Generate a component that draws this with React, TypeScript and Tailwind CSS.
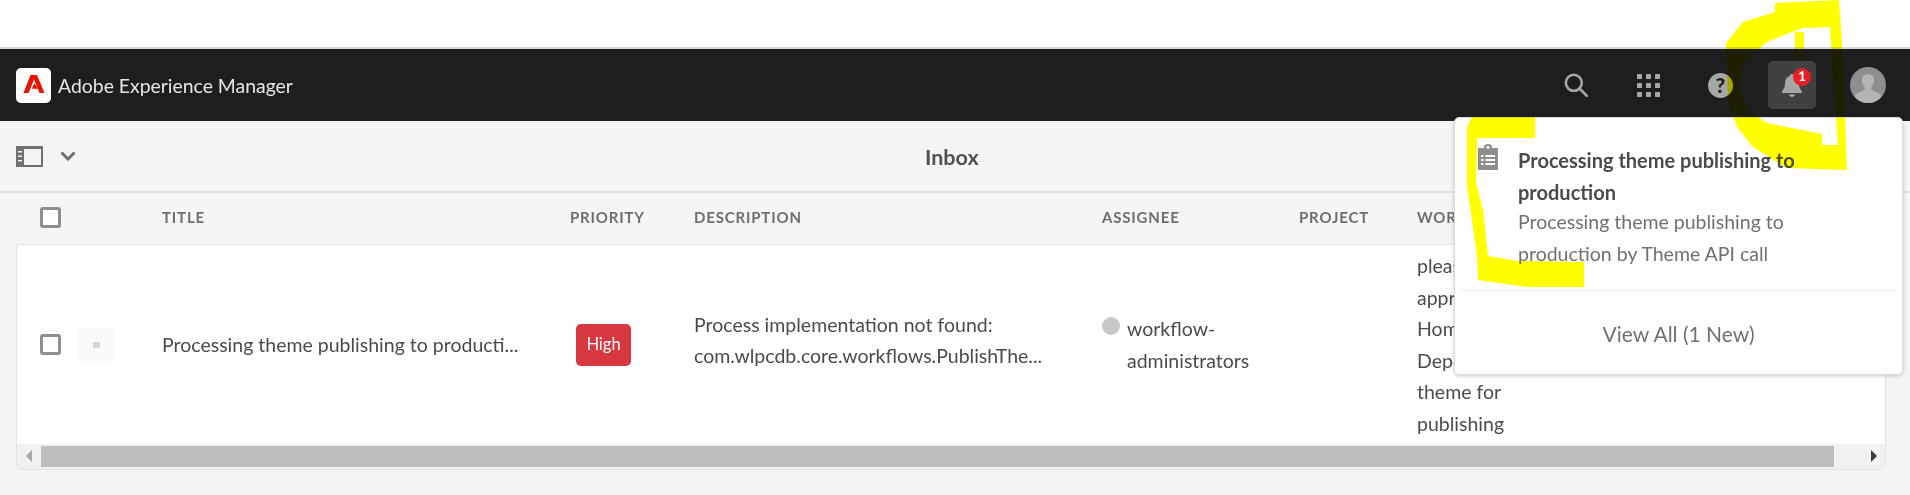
const font = "font-['Lato','Open_Sans',sans-serif]";

function AdobeLogo() {
  return (
    <div className="flex h-[35px] w-[35px] items-center justify-center rounded-[5px] bg-white">
      <svg width="35" height="35" viewBox="0 0 35 35" fill="#eb1000">
        <path d="M14.500 7H21L28.500 25H23.600L18 11.500L12.600 25H7.500Z" />
        <path d="M18.300 15L22 20.800H15.900Z" />
      </svg>
    </div>
  );
}

function SearchIcon() {
  return (
    <svg width="24" height="24" viewBox="0 0 24 24" fill="none" stroke="#a6a6a6" strokeWidth="2.600">
      <circle cx="9.800" cy="9.800" r="8" />
      <path d="M15.500 15.500l7.500 7.500" strokeLinecap="round" />
    </svg>
  );
}

function AppsIcon() {
  const cells = [0, 9, 18];
  return (
    <svg width="23" height="23" viewBox="0 0 23 23" fill="#a6a6a6">
      {cells.map((y) => cells.map((x) => <rect key={`${x}-${y}`} x={x} y={y} width="5" height="5" rx="0.500" />))}
    </svg>
  );
}

function HelpIcon() {
  return (
    <svg width="25" height="25" viewBox="0 0 25 25">
      <circle cx="12.500" cy="12.500" r="12.500" fill="#a6a6a6" />
      <text x="12.500" y="20" textAnchor="middle" fontSize="21" fontWeight="900" fill="#1e1e1e" fontFamily="Lato, sans-serif">?</text>
    </svg>
  );
}

function BellIcon() {
  return (
    <svg width="22" height="25" viewBox="0 0 22 25" fill="#a6a6a6">
      <path d="M11 1c1.400 0 2.200.9 2.300 2 3.200.9 4.500 3.500 4.600 7 .1 3.600 1 6 3.100 8.500v1.500H1v-1.500C3.100 16 4 13.600 4.100 10c.1-3.500 1.400-6.100 4.600-7C8.800 1.900 9.600 1 11 1z" />
      <path d="M8 21.500h6c-.3 1.500-1.500 2.500-3 2.500s-2.700-1-3-2.500z" />
    </svg>
  );
}

function Avatar() {
  return (
    <svg width="36" height="36" viewBox="0 0 36 36" className="ml-[34px]">
      <defs>
        <clipPath id="avatar-clip">
          <circle cx="18" cy="18" r="18" />
        </clipPath>
      </defs>
      <circle cx="18" cy="18" r="18" fill="#8e8e8e" />
      <g clipPath="url(#avatar-clip)" fill="#b4b4b4">
        <path d="M18 7c3.800 0 6 2.800 6 6.500 0 2.800-1.100 5.400-2.700 6.900v2.300c2.600 1.500 8.700 2.700 9.700 6.300v8H5v-8c1-3.600 7.100-4.800 9.700-6.300v-2.300c-1.600-1.500-2.700-4.100-2.700-6.900C12 9.800 14.200 7 18 7z" />
      </g>
    </svg>
  );
}

function PanelIcon() {
  return (
    <svg width="27" height="21" viewBox="0 0 27 21">
      <rect width="27" height="21" fill="#707070" />
      <rect x="8" y="3" width="17" height="16" fill="#f5f5f5" />
      <path d="M2 5h4v1.500H2zM2 9.500h4V11H2zM2 14h4v1.500H2z" fill="#f5f5f5" />
    </svg>
  );
}

function ClipboardIcon() {
  return (
    <svg width="20" height="26" viewBox="0 0 20 26">
      <path d="M0 4h6V2.500C6 1 8 0 10 0s4 1 4 2.500V4h6v22H0z" fill="#8e8e8e" />
      <path d="M8.500 4.500V3c0-.6.700-1 1.500-1s1.500.4 1.500 1v1.500z" fill="#fff" />
      <path d="M3 11h2.500v2H3zM7.500 11H17v2H7.500zM3 15h2.500v2H3zM7.500 15H17v2H7.500zM3 19h2.500v2H3zM7.500 19H17v2H7.500z" fill="#fff" />
    </svg>
  );
}

function Checkbox() {
  return <div className="h-[21px] w-[21px] rounded-[3px] border-[3px] border-[#8e8e8e] bg-white" />;
}

// yellow marker strokes someone scribbled over the screenshot
function Highlighter() {
  return (
    <svg width="1910" height="495" viewBox="0 0 1910 495" className="pointer-events-none absolute inset-0 mix-blend-multiply">
      <path
        d="M1775 3L1839 0L1842 43L1847 170L1787 168L1753 147L1737 127L1728 100L1726 43L1743 22L1775 12Z
           M1830 27L1803 28L1792 32L1767 42L1743 63L1738 83L1747 110L1767 123L1822 134L1822 145L1838 145Z"
        fill="#ffff00"
        fillRule="evenodd"
      />
      <rect x="1795" y="32" width="9" height="26" fill="#ffff00" />
      <path
        d="M1472 117H1535V138H1477L1476 183L1483 210L1488 256L1517 261L1584 262V287H1527L1478 280L1477 257L1472 220L1467 187V127Z"
        fill="#ffff00"
      />
    </svg>
  );
}

export default function App() {
  return (
    <div className={`relative flex h-[495px] w-[1910px] flex-col overflow-hidden bg-[#f5f5f5] ${font}`}>
      <div className="h-[47px] border-b-2 border-[#d8d8d8] bg-white box-content" />

      <header className="flex h-[72px] items-center justify-between bg-[#1e1e1e] pl-[16px] pr-[24px]">
        <div className="flex items-center gap-[7px]">
          <AdobeLogo />
          <span className="pt-[1px] text-[19.400px] text-[#e6e6e6]">Adobe Experience Manager</span>
        </div>
        <div className="flex items-center">
          <div className="flex w-[48px] justify-center"><SearchIcon /></div>
          <div className="ml-[24px] flex w-[48px] justify-center"><AppsIcon /></div>
          <div className="ml-[24px] flex w-[48px] justify-center"><HelpIcon /></div>
          <div className="ml-[24px] relative flex h-[48px] w-[48px] items-center justify-center rounded-[5px] bg-[#414141]">
            <BellIcon />
            <span className="absolute left-[25px] top-[7px] flex h-[18px] w-[18px] items-center justify-center rounded-full bg-[#e81f26] text-[13px] font-black text-white">1</span>
          </div>
          <Avatar />
        </div>
      </header>

      <div className="relative flex h-[72px] items-center border-b-2 border-[#e1e1e1] pl-[16px]">
        <PanelIcon />
        <svg width="16" height="10" viewBox="0 0 16 10" className="ml-[17px]" fill="none" stroke="#707070" strokeWidth="3">
          <path d="M1.500 1.500L8 8l6.500-6.500" />
        </svg>
        <span className="absolute left-[925px] top-[26px] text-[21.500px] font-bold leading-none text-[#505050]">Inbox</span>
      </div>

      <div className="flex h-[51px] items-center pb-[2px] pl-[40px] text-[15px] font-bold tracking-[0.055em] text-[#6e6e6e]">
        <div className="w-[122px]"><Checkbox /></div>
        <div className="w-[408px]">TITLE</div>
        <div className="w-[124px]">PRIORITY</div>
        <div className="w-[408px]">DESCRIPTION</div>
        <div className="w-[197px]">ASSIGNEE</div>
        <div className="w-[118px]">PROJECT</div>
        <div>WORKFLOW</div>
      </div>

      <div className="ml-[16px] flex h-[226px] w-[1870px] flex-col overflow-hidden rounded-[4px] border border-[#e3e3e3] bg-white">
        <div className="flex h-[200px] items-center pl-[23px] text-[19.500px] leading-[31.500px] text-[#4b4b4b]">
          <div className="w-[38px]"><Checkbox /></div>
          <div className="flex w-[84px]">
            <div className="flex h-[36px] w-[36px] items-center justify-center bg-[#fafafa]">
              <div className="h-[6px] w-[7px] bg-[#d5d5d5]" />
            </div>
          </div>
          <div className="w-[408px]">Processing theme publishing to producti...</div>
          <div className="w-[124px] pl-[6px]">
            <span className="flex h-[42px] w-[55px] items-center justify-center rounded-[5px] bg-[#d7373f] text-[16.500px] text-white">High</span>
          </div>
          <div className="mb-[9px] w-[408px]">
            <div>Process implementation not found:</div>
            <div>com.wlpcdb.core.workflows.PublishThe...</div>
          </div>
          <div className="flex w-[197px] items-start">
            <div className="mt-[4px] h-[18px] w-[18px] shrink-0 rounded-full bg-[#c8c8c8]" />
            <div className="ml-[7px]">workflow-<br />administrators</div>
          </div>
          <div className="w-[118px]" />
          <div className="w-[110px]">
            please<br />approve<br />Home<br />Depot<br />theme for<br />publishing
          </div>
        </div>
        <div className="flex h-[25px] items-center bg-[#f1f1f1] pb-[1px]">
          <div className="flex w-[24px] justify-center">
            <div className="h-0 w-0 border-y-[6px] border-r-[6px] border-y-transparent border-r-[#a6a6a6]" />
          </div>
          <div className="h-[21px] w-[1793px] bg-[#bdbdbd]" />
          <div className="flex flex-1 justify-end pr-[8px]">
            <div className="h-0 w-0 border-y-[6px] border-l-[6px] border-y-transparent border-l-[#3c3c3c]" />
          </div>
        </div>
      </div>

      <div className="absolute left-[1454px] top-[117px] h-[258px] w-[449px] rounded-[5px] border border-[#dcdcdc] bg-white shadow-[0_1px_4px_rgba(0,0,0,0.2)]">
        <div className="flex pl-[23px] pr-[6px] pt-[26px]">
          <ClipboardIcon />
          <div className="ml-[20px] w-[300px] leading-[32px]">
            <div className="text-[20px] font-bold text-[#4b4b4b]">Processing theme publishing to production</div>
            <div className="-mt-[2px] text-[19.500px] text-[#707070]">Processing theme publishing to production by Theme API call</div>
          </div>
        </div>
        <div className="mx-[6px] mt-[20px] border-t border-[#f0f0f0]" />
        <div className="flex h-[85px] items-center justify-center text-[21px] text-[#707070]">View All (1 New)</div>
      </div>

      <Highlighter />
    </div>
  );
}
